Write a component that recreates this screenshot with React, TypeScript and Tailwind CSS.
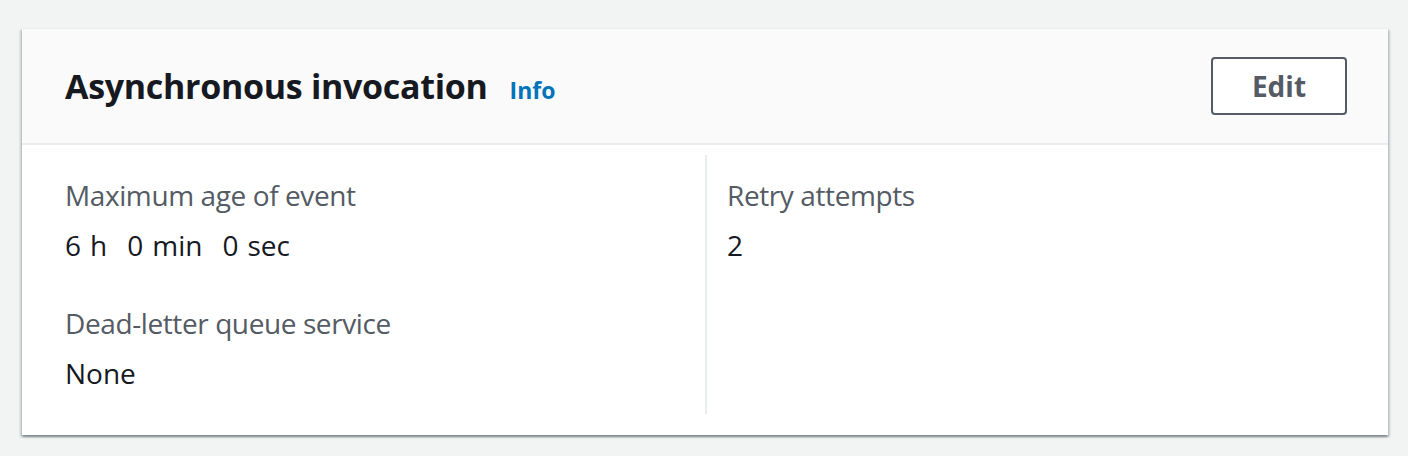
import React from "react";

const font = { fontFamily: '"Open Sans", "Noto Sans", Arial, sans-serif' };

const Field: React.FC<{ label: string; value: React.ReactNode; className?: string }> = ({ label, value, className }) => (
  <div className={className}>
    <div className="text-[28px] leading-[40px] tracking-[-0.4px] text-[#545b64]">{label}</div>
    <div className="mt-[10px] text-[28px] leading-[40px] text-[#16191f]">{value}</div>
  </div>
);

export default function App() {
  return (
    <div className="min-h-[456px] bg-[#f2f3f3] pl-[22px] pr-[20px] pt-[28px]" style={font}>
      <div className="bg-white border-t border-[#eaeded] shadow-[0_2px_2px_0_rgba(0,28,36,0.3),2px_2px_2px_0_rgba(0,28,36,0.15),-2px_2px_2px_0_rgba(0,28,36,0.15)]">
        {/* Header */}
        <div className="flex h-[116px] items-center justify-between border-b-2 border-[#eaeded] bg-[#fafafa] pl-[43px] pr-[41px]">
          <div className="flex items-baseline gap-[22px]">
            <h2 className="text-[34px] font-bold leading-[44px] tracking-[-0.3px] text-[#16191f]">Asynchronous invocation</h2>
            <span className="text-[23px] font-bold text-[#0073bb]">Info</span>
          </div>
          <button className="h-[58px] w-[136px] rounded-[4px] border-2 border-[#545b64] bg-white text-[28px] font-bold text-[#545b64]">
            Edit
          </button>
        </div>

        {/* Body */}
        <div className="grid grid-cols-2 px-[43px] pb-[21px] pt-[10px]">
          <div className="flex flex-col gap-[38px] pb-[21px] pt-[20px]">
            <Field
              label="Maximum age of event"
              value={
                <span className="flex gap-[20px]">
                  <span className="flex gap-[9px]"><span>6</span><span>h</span></span>
                  <span className="flex gap-[9px]"><span>0</span><span>min</span></span>
                  <span className="flex gap-[9px]"><span>0</span><span>sec</span></span>
                </span>
              }
            />
            <Field label="Dead-letter queue service" value="None" />
          </div>
          <div className="border-l-2 border-[#eaeded] pb-[21px] pl-[20px] pt-[20px]">
            <Field label="Retry attempts" value="2" />
          </div>
        </div>
      </div>
    </div>
  );
}
